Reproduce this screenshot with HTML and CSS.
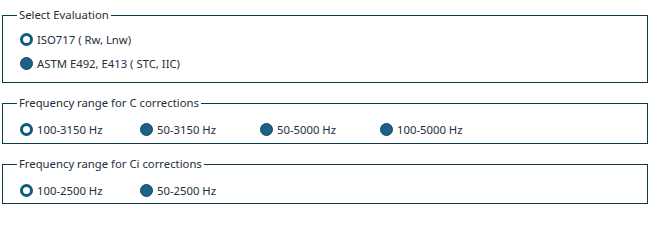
FILE: index.html
```html
<!DOCTYPE html>
<html lang="en">

<head>
    <meta charset="UTF-8">
    <title>Evaluation settings</title>
    <link rel="stylesheet" href="styles.css">
</head>

<body>
    <fieldset class="group stacked">
        <legend>Select Evaluation</legend>
        <div class="options">
            <label class="option"><span class="radio checked"></span>ISO717 ( Rw, Lnw)</label>
            <label class="option"><span class="radio"></span>ASTM E492, E413 ( STC, IIC)</label>
        </div>
    </fieldset>

    <fieldset class="group">
        <legend>Frequency range for C corrections</legend>
        <div class="options">
            <label class="option"><span class="radio checked"></span>100-3150 Hz</label>
            <label class="option"><span class="radio"></span>50-3150 Hz</label>
            <label class="option"><span class="radio"></span>50-5000 Hz</label>
            <label class="option"><span class="radio"></span>100-5000 Hz</label>
        </div>
    </fieldset>

    <fieldset class="group last">
        <legend>Frequency range for Ci corrections</legend>
        <div class="options">
            <label class="option"><span class="radio checked"></span>100-2500 Hz</label>
            <label class="option"><span class="radio"></span>50-2500 Hz</label>
        </div>
    </fieldset>
</body>

</html>
```

FILE: styles.css
```css
body {
    font-family: "Noto Sans", "Open Sans", sans-serif;
    font-size: 11.3px;
    color: #1d2f3b;
    margin: 0;
    padding: 7px 7px 0 2px;
    background: #fff;
}

.group {
    border: 1px solid #0d3a47;
    margin: 0 0 12px 0;
    padding: 6px 0 2px 17px;
    min-width: 0;
}

.group.stacked {
    padding-top: 4px;
    padding-bottom: 7px;
}

.group.last {
    padding-bottom: 1px;
}

.group legend {
    padding: 0 2px;
    margin-left: -3px;
    line-height: 16px;
}

.options {
    display: flex;
}

.stacked .options {
    flex-direction: column;
}

.option {
    display: flex;
    align-items: center;
    height: 24px;
    width: 120px;
    white-space: nowrap;
}

.radio {
    box-sizing: border-box;
    width: 13px;
    height: 13px;
    border-radius: 50%;
    background: #1d6189;
    border: 1px solid #0f4563;
    margin-right: 4px;
    flex: none;
}

.radio.checked {
    background: #fff;
    border: 3px solid #0e5a7e;
}
```
